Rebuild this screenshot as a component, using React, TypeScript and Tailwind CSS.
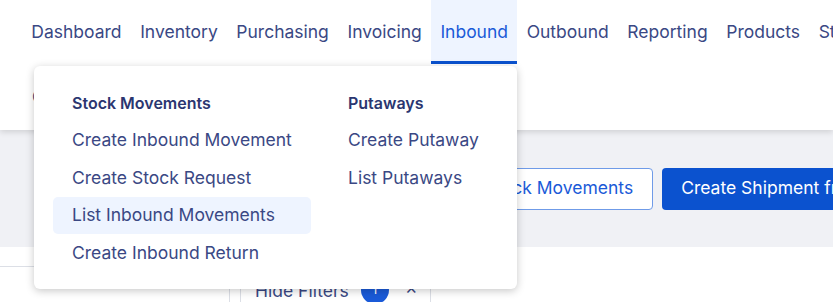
import React from "react";

const navItems = ["Dashboard", "Inventory", "Purchasing", "Invoicing", "Inbound", "Outbound", "Reporting", "Products", "Stocklists"];

export default function App() {
  return (
    <div className="relative w-[833px] h-[302px] overflow-hidden bg-white" style={{ fontFamily: "Inter, 'Noto Sans', sans-serif" }}>
      {/* Header */}
      <div className="relative z-10 bg-white shadow-[0_2px_6px_rgba(0,0,0,0.14)]">
        <div className="flex h-[64px] pl-[22px] whitespace-nowrap">
          {navItems.map((n) =>
            n === "Inbound" ? (
              <div key={n} className="flex h-full shrink-0 items-center px-[9.3px] pt-[3px] bg-[#eef4ff] text-[#1a5ad8] border-b-[3px] border-[#0b52cf] text-[17.5px]">
                {n}
              </div>
            ) : (
              <div key={n} className="flex h-full shrink-0 items-center px-[9.3px] text-[#3a4884] text-[17.5px]">
                {n}
              </div>
            )
          )}
        </div>
        <div className="flex h-[66px] items-center pl-[32px] text-[#3a4884] text-[17.5px]">
          <span>Configuration</span>
        </div>
      </div>

      {/* Gray action bar */}
      <div className="flex h-[117px] items-center bg-[#f0f1f5] pl-[430px] gap-[9px] whitespace-nowrap">
        <button className="h-[42px] shrink-0 rounded-[4px] border border-[#6f9be8] bg-white pl-[20px] pr-[19px] text-[17.5px] text-[#1a5ad8]">
          List Stock Movements
        </button>
        <button className="h-[42px] shrink-0 rounded-[4px] bg-[#0b52cf] px-[19px] text-[17.5px] text-white">
          Create Shipment from Order
        </button>
      </div>

      {/* Lower content */}
      <div className="flex h-[55px]">
        <div className="w-[230px] shrink-0 border-r border-[#dcdfe6]">
          <div className="h-[20px] border-b border-[#dcdfe6]" />
        </div>
        <div className="w-[10px] shrink-0" />
        <div className="mt-[18px] flex h-[40px] w-[191px] items-start gap-[12px] border-x border-t border-[#dcdfe6] pl-[14px] pt-[12px] text-[17.5px] text-[#3a4884]">
          <span>Hide Filters</span>
          <span className="mt-[-2px] flex h-[28px] w-[28px] shrink-0 items-center justify-center rounded-full bg-[#1a5ad8] text-[13px] text-white">1</span>
          <span className="ml-[4px] text-[15px]">✕</span>
        </div>
      </div>

      {/* Dropdown */}
      <div className="absolute left-[34px] top-[66px] z-20 w-[483px] h-[223px] rounded-[6px] bg-white shadow-[0_2px_8px_rgba(0,0,0,0.22)] pt-[18px] pl-[19px] flex whitespace-nowrap">
        <div className="flex w-[258px] flex-col">
          <div className="flex h-[37.5px] items-center px-[19px] text-[16px] font-semibold text-[#2b3670]">Stock Movements</div>
          <div className="flex h-[37.5px] items-center px-[19px] text-[17.5px] text-[#3a4884]">Create Inbound Movement</div>
          <div className="flex h-[37.5px] items-center px-[19px] text-[17.5px] text-[#3a4884]">Create Stock Request</div>
          <div className="flex h-[37.5px] items-center rounded-[5px] bg-[#eef4ff] px-[19px] text-[17.5px] text-[#3a4884]">List Inbound Movements</div>
          <div className="flex h-[37.5px] items-center px-[19px] text-[17.5px] text-[#3a4884]">Create Inbound Return</div>
        </div>
        <div className="ml-[18px] flex w-[170px] flex-col">
          <div className="flex h-[37.5px] items-center px-[19px] text-[16px] font-semibold text-[#2b3670]">Putaways</div>
          <div className="flex h-[37.5px] items-center px-[19px] text-[17.5px] text-[#3a4884]">Create Putaway</div>
          <div className="flex h-[37.5px] items-center px-[19px] text-[17.5px] text-[#3a4884]">List Putaways</div>
        </div>
      </div>
    </div>
  );
}
